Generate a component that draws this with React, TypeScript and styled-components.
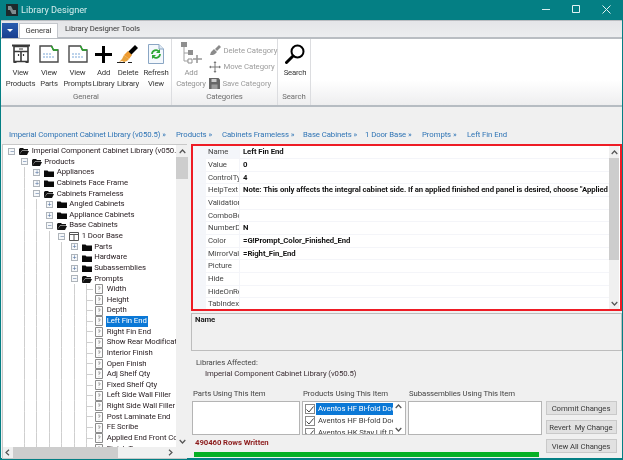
import React from "react";
import styled, { createGlobalStyle } from "styled-components";

const Global = createGlobalStyle`
  html, body { margin: 0; padding: 0; background: #047f84; }
  * { box-sizing: border-box; }
`;

const FONT = `Roboto, "Liberation Sans", sans-serif`;

const Page = styled.div`
  width: 623px; height: 460px; overflow: hidden; display: flex; flex-direction: column;
  font-family: ${FONT}; font-size: 7.75px; letter-spacing: -0.07px; color: #333; background: #047f84;
  filter: blur(0.35px);
`;
const TitleBar = styled.div`
  height: 20px; flex: none; display: flex; align-items: center; padding: 0 2px 1px 6px; color: #d5ecec; font-size: 9.2px; letter-spacing: 0;
`;
const TitleText = styled.span` margin-left: 3px; flex: 1; `;
const WinButton = styled.div`
  width: 30px; height: 19px; display: flex; align-items: center; justify-content: center;
`;
const Frame = styled.div`
  flex: 1; min-height: 0; margin: 0 1px 2px 1px; background: #f0f0f0; display: flex; flex-direction: column;
`;
const TabRow = styled.div`
  height: 16.5px; flex: none; display: flex; align-items: flex-end; padding-left: 1px;
  background: linear-gradient(#e4e5e8, #ecedef); border-top: 1px solid #b9bcc0;
`;
const AppButton = styled.div`
  width: 16px; height: 15px; margin-bottom: -1.5px; position: relative; z-index: 1;
  background: linear-gradient(#2a5db0, #1a3f8f);
  display: flex; align-items: center; justify-content: center;
`;
const Tab = styled.div<{ $active?: boolean; $w: number }>`
  width: ${p => p.$w}px; height: 15.5px; display: flex; align-items: center; justify-content: center; color: #3a3a3a;
  margin-left: ${p => (p.$active ? 1 : 0)}px;
  margin-bottom: ${p => (p.$active ? -1.5 : 0)}px; position: relative; z-index: 1;
  background: ${p => (p.$active ? "#fff" : "transparent")};
  ${p => p.$active && "border: 1px solid #c4c7cc; border-bottom: none;"}
`;
const Ribbon = styled.div`
  height: 70.5px; flex: none; display: flex; align-items: stretch;
  background: linear-gradient(#fff 0%, #fff 62%, #eeeeef 100%);
  border-top: 2px solid #b9bdc2; border-bottom: 2px solid #b6bcc2;
`;
const Group = styled.div<{ $w: number }>`
  width: ${p => p.$w}px; flex: none; display: flex; flex-direction: column;
  border-right: 1px solid #dcdde0;
`;
const GroupBody = styled.div<{ $pad?: number }>`
  flex: 1; display: flex; padding-left: ${p => p.$pad ?? 0}px; min-height: 0;
`;
const GroupLabel = styled.div`
  height: 14px; flex: none; text-align: center; color: #6e6e6e; line-height: 12.5px;
`;
const RibbonButton = styled.div<{ $w: number; $off?: boolean }>`
  width: ${p => p.$w}px; flex: none; display: flex; flex-direction: column; align-items: center;
  padding-top: 3.5px; text-align: center; line-height: 11px; letter-spacing: -0.2px; color: ${p => (p.$off ? "#949494" : "#383838")};
  white-space: nowrap;
`;
const IconSlot = styled.div`
  height: 24px; display: flex; align-items: center; justify-content: center; margin-bottom: 1px;
`;
const SmallStack = styled.div`
  display: flex; flex-direction: column; padding-top: 5.5px; gap: 4.5px;
`;
const SmallItem = styled.div`
  height: 12px; display: flex; align-items: center; gap: 3px; color: #9c9c9c; white-space: nowrap;
`;
const Crumbs = styled.div`
  height: 37px; flex: none; display: flex; align-items: flex-end; padding: 0 0 5px 8px; color: #2f74b5;
`;
const Crumb = styled.span<{ $w: number }>` width: ${p => p.$w}px; flex: none; white-space: nowrap; `;
const Main = styled.div`
  flex: 1; min-height: 0; display: flex; padding-left: 1px;
`;
const TreeBox = styled.div`
  width: 185px; height: 315px; flex: none; display: grid;
  grid-template-columns: 173px 12px; grid-template-rows: 302px 11px;
  background: #fff; border: 1px solid #c8c8c8;
`;
const TreeRows = styled.div` overflow: hidden; padding-top: 1px; `;
const TreeRowEl = styled.div`
  height: 10.63px; display: flex; align-items: stretch; white-space: nowrap; padding-left: 2.7px; color: #2b2125;
`;
const Cell = styled.div<{ $line?: boolean; $dash?: boolean }>`
  width: 12.5px; flex: none; display: flex; align-items: center; justify-content: center;
  ${p => p.$line && `background: linear-gradient(#cfcfcf, #cfcfcf) center / 1px 100% no-repeat;`}
  ${p => p.$dash && `background: linear-gradient(#cfcfcf, #cfcfcf) center / 1px 100% no-repeat, linear-gradient(#cfcfcf, #cfcfcf) right center / 6px 1px no-repeat;`}
`;
const Expander = styled.div`
  width: 7px; height: 7px; border: 1px solid #aeb4ba; background: #f6f8fa; display: flex; align-items: center; justify-content: center;
  color: #4a6a9a; font-size: 7px; line-height: 5px; font-family: "Liberation Sans", sans-serif;
`;
const TreeIcon = styled.div` width: 10px; margin-left: 1px; flex: none; display: flex; align-items: center; justify-content: center; `;
const TreeLabel = styled.span<{ $sel?: boolean }>`
  margin-left: ${p => (p.$sel ? 1.5 : 2.5)}px; line-height: 10.6px; padding: 0 ${p => (p.$sel ? 1 : 0)}px;
  background: ${p => (p.$sel ? "#0b78d6" : "transparent")}; color: ${p => (p.$sel ? "#fff" : "inherit")};
`;
const VBar = styled.div`
  background: #f0f0f0; display: flex; flex-direction: column; align-items: center; justify-content: space-between;
`;
const VThumb = styled.div<{ $h: number }>` width: 100%; height: ${p => p.$h}px; background: #cdcdcd; flex: none; `;
const VStart = styled.div` width: 100%; display: flex; flex-direction: column; align-items: center; `;
const Arrow = styled.div` height: 12px; flex: none; display: flex; align-items: center; justify-content: center; `;
const HBar = styled.div`
  background: #f0f0f0; display: flex; align-items: center; justify-content: space-between; padding: 0 3px 0 2px;
`;
const HTrack = styled.div` display: flex; align-items: center; height: 100%; `;
const HThumb = styled.div` width: 105px; height: 100%; background: #cdcdcd; margin-left: 3px; `;
const Corner = styled.div` background: #f0f0f0; `;
const Right = styled.div`
  flex: 1; min-width: 0; display: flex; flex-direction: column; margin-left: 4px;
`;
const GridBox = styled.div`
  height: 167px; flex: none; display: flex; border: 2px solid #ee1c25; background: #fff;
`;
const GridRows = styled.div` flex: 1; min-width: 0; overflow: hidden; padding-top: 0.3px; `;
const GridRowEl = styled.div`
  height: 12.67px; display: grid; grid-template-columns: 13px 33px 1fr; border-bottom: 1px solid #f4f5f9; white-space: nowrap;
`;
const Gutter = styled.div` background: #f4f6fa; `;
const PropName = styled.div<{ $sel?: boolean }>`
  overflow: hidden; padding-left: 2px; line-height: 12px; color: #454545; background: ${p => (p.$sel ? "#f4f6fa" : "#fff")};
`;
const PropValue = styled.div`
  overflow: hidden; padding-left: 3px; line-height: 11.5px; font-weight: 700; color: #141414; border-left: 1px solid #f4f5f9;
`;
const GridBar = styled(VBar)` width: 10px; flex: none; margin-right: 1px; `;
const Desc = styled.div`
  height: 38px; flex: none; margin-top: 2px; border: 1px solid #bdbdbd; padding: 1px 3px; font-weight: 700; color: #222;
`;
const Affected = styled.div` padding: 6px 0 0 5px; line-height: 11px; color: #454545; flex: none; `;
const AffectedName = styled.div` padding-left: 9px; color: #3c2e34; `;
const Bottom = styled.div`
  display: grid; flex: none; margin-top: 10px; padding-left: 1px;
  grid-template-columns: 107.5px 103.5px 134px 72px; column-gap: 2.5px;
  grid-template-rows: 12px 34px 17px 6px;
`;
const ColHead = styled.div` padding-left: 1px; color: #444; white-space: nowrap; line-height: 9px; `;
const ListBox = styled.div`
  background: #fff; border: 1px solid #b4b4b4; overflow: hidden;
`;
const ProductList = styled(ListBox)` display: grid; grid-template-columns: 1fr 12px; `;
const CheckRows = styled.div` padding: 1px 0 0 2px; overflow: hidden; `;
const CheckRow = styled.div` height: 12px; display: flex; align-items: center; gap: 1px; white-space: nowrap; color: #3a3a3a; `;
const Check = styled.div`
  width: 10px; height: 10px; flex: none; border: 1px solid #8a8a8a; background: #fff; display: flex; align-items: center; justify-content: center;
`;
const CheckText = styled.span<{ $sel?: boolean }>`
  flex: 1; overflow: hidden; background: ${p => (p.$sel ? "#0b78d6" : "transparent")}; color: ${p => (p.$sel ? "#fff" : "inherit")}; line-height: 12px; padding-left: 2px;
`;
const ListBar = styled.div` display: flex; flex-direction: column; justify-content: space-between; align-items: center; padding: 2px 0; background: #fff; `;
const ActionStack = styled.div`
  grid-column: 4; grid-row: 2 / 5; display: flex; flex-direction: column; gap: 5px; margin-left: 1px;
`;
const ActionButton = styled.div`
  height: 14px; flex: none; background: #e1e1e1; border: 1px solid #c9c9c9; display: flex; align-items: center; justify-content: center;
  color: #3a3a3a; white-space: pre;
`;
const Status = styled.div`
  grid-column: 1 / 4; padding: 2px 0 0 3px; color: #8c1c1c; font-weight: 700; line-height: 11px;
`;
const Progress = styled.div`
  grid-column: 1 / 4; height: 5px; margin: 0 3px 0 2px; background: #06b025;
`;

type RowT = { l: number; x?: "+" | "-"; i: "closed" | "open" | "table" | "doc"; t: string; sel?: boolean };
const tree: RowT[] = [
  { l: 0, x: "-", i: "open", t: "Imperial Component Cabinet Library (v050.5)" },
  { l: 1, x: "-", i: "open", t: "Products" },
  { l: 2, x: "+", i: "closed", t: "Appliances" },
  { l: 2, x: "+", i: "closed", t: "Cabinets Face Frame" },
  { l: 2, x: "-", i: "open", t: "Cabinets Frameless" },
  { l: 3, x: "+", i: "closed", t: "Angled Cabinets" },
  { l: 3, x: "+", i: "closed", t: "Appliance Cabinets" },
  { l: 3, x: "-", i: "open", t: "Base Cabinets" },
  { l: 4, x: "-", i: "table", t: "1 Door Base" },
  { l: 5, x: "+", i: "closed", t: "Parts" },
  { l: 5, x: "+", i: "closed", t: "Hardware" },
  { l: 5, x: "+", i: "closed", t: "Subassemblies" },
  { l: 5, x: "-", i: "open", t: "Prompts" },
  ...["Width", "Height", "Depth", "Left Fin End", "Right Fin End", "Show Rear Modifications", "Interior Finish", "Open Finish", "Adj Shelf Qty", "Fixed Shelf Qty", "Left Side Wall Filler", "Right Side Wall Filler", "Post Laminate End", "FE Scribe", "Applied End Front Color", "Finish Type"].map(
    (t): RowT => ({ l: 6, i: "doc", t, sel: t === "Left Fin End" })
  ),
];

const Closed = () => (
  <svg width="10" height="8" viewBox="0 0 10 8"><path d="M0 1.5h3.5l1 1H10V8H0z" fill="#0a0a0a" /></svg>
);
const Open = () => (
  <svg width="10" height="8" viewBox="0 0 10 8"><path d="M1 1h3l1 1h4v1.5H3L0 8V2z" fill="#111" /><path d="M3 4h7L8 8H0z" fill="#111" /></svg>
);
const Table = () => (
  <svg width="10" height="9" viewBox="0 0 10 9" fill="none" stroke="#555"><path d="M.5.5h9v8h-9zM.5 2.5h9M5 2.5v6" /></svg>
);
const Doc = () => (
  <svg width="8" height="10" viewBox="0 0 8 10"><path d="M.5.5h7v9h-7z" fill="#fbfbfb" stroke="#8c8c8c" /><path d="M3 3h2v1.5H4V6M4 7.5v.6" stroke="#aaa" fill="none" /></svg>
);
const treeIcons = { closed: <Closed />, open: <Open />, table: <Table />, doc: <Doc /> };

const TreeRow = ({ r }: { r: RowT }) => {
  const guides = r.l > 0 ? [<Cell key="g0" />] : [];
  for (let i = 1; i < r.l; i++) guides.push(<Cell key={i} $line />);
  return (
    <TreeRowEl>
      {guides}
      {r.x ? (
        <Cell>
          <Expander>{r.x === "+" ? "+" : "−"}</Expander>
        </Cell>
      ) : (
        <Cell $dash />
      )}
      <TreeIcon>{treeIcons[r.i]}</TreeIcon>
      <TreeLabel $sel={r.sel}>{r.t}</TreeLabel>
    </TreeRowEl>
  );
};

const props: [string, string][] = [
  ["Name", "Left Fin End"],
  ["Value", "0"],
  ["ControlType", "4"],
  ["HelpText", 'Note: This only affects the integral cabinet side. If an applied finished end panel is desired, choose "Applied End Panel"'],
  ["ValidationRule", ""],
  ["ComboBoxItems", ""],
  ["NumberDecimals", "N"],
  ["Color", "=G!Prompt_Color_Finished_End"],
  ["MirrorValue", "=Right_Fin_End"],
  ["Picture", ""],
  ["Hide", ""],
  ["HideOnReport", ""],
  ["TabIndex", ""],
];

const ChevUp = () => (
  <svg width="7" height="5" viewBox="0 0 7 5" fill="none" stroke="#555" strokeWidth="1.2"><path d="M.7 4l2.8-3 2.8 3" /></svg>
);
const ChevDown = () => (
  <svg width="7" height="5" viewBox="0 0 7 5" fill="none" stroke="#555" strokeWidth="1.2"><path d="M.7 1l2.8 3 2.8-3" /></svg>
);
const ChevLeft = () => (
  <svg width="5" height="7" viewBox="0 0 5 7" fill="none" stroke="#555" strokeWidth="1.2"><path d="M4 .7L1 3.5l3 2.8" /></svg>
);
const ChevRight = () => (
  <svg width="5" height="7" viewBox="0 0 5 7" fill="none" stroke="#555" strokeWidth="1.2"><path d="M1 .7l3 2.8-3 2.8" /></svg>
);

const Cabinet = () => (
  <svg width="20" height="20" viewBox="0 0 20 20" fill="none" stroke="#3a3a3a">
    <path d="M1 1.5h18" strokeWidth="2" />
    <path d="M3 2.5h14v15H3zM3 7.5h14M10 7.5v10" strokeWidth="1.6" />
    <path d="M8 5h4M7.5 10v2M12.5 10v2M2.5 18.5h3M14.5 18.5h3" strokeWidth="1.2" />
  </svg>
);
const PagePic = () => (
  <svg width="20" height="18" viewBox="0 0 20 18" fill="none">
    <path d="M1 1h11.5l2 4H19v12H1z" fill="#fff" stroke="#4a4a4a" strokeWidth="1.4" />
    <path d="M12.5 1l2 4H19" stroke="#29a52a" strokeWidth="1.4" />
    <path d="M4 9h2M7 9h2M10 9h2M4 12h2M7 12h2M10 12h2M13 12h2" stroke="#7da7d8" strokeWidth="1.2" />
  </svg>
);
const Plus = () => (
  <svg width="19" height="19" viewBox="0 0 19 19"><path d="M8 1h3v7h7v3h-7v7H8v-7H1V8h7z" fill="#000" /></svg>
);
const Brush = () => (
  <svg width="22" height="20" viewBox="0 0 22 20">
    <path d="M11 8l7-7 3 3-7 7z" fill="#000" />
    <path d="M7 11l4-4 4 4-3 4z" fill="#ef9a2e" />
    <path d="M7 11l5 4-2 2-3 1-2-1-3 1 3-3z" fill="#e9a23c" />
    <path d="M0 18h8v1H0zM11 18h4v1h-4z" fill="#222" />
  </svg>
);
const Refresh = () => (
  <svg width="16" height="20" viewBox="0 0 16 20">
    <path d="M.5.5H11L15.5 5v14.5H.5z" fill="#f4f8fc" stroke="#8aa6c4" />
    <path d="M11 .5V5h4.5" fill="#dfe9f3" stroke="#8aa6c4" />
    <path d="M4 10a4 4 0 0 1 7-2.5M12 10a4 4 0 0 1-7 2.5" stroke="#2fa836" strokeWidth="1.8" fill="none" />
    <path d="M12 5v4H8zM4 15v-4h4z" fill="#2fa836" />
  </svg>
);
const CatTree = () => (
  <svg width="22" height="24" viewBox="0 0 22 24" fill="none">
    <path d="M1 0h6v5H1z" fill="#8f8f8f" />
    <path d="M4 5v14h4M4 11h4" stroke="#a0a0a0" />
    <path d="M8 8h5v5H8z" fill="#8f8f8f" />
    <path d="M8 17h4v4H8z" stroke="#8f8f8f" />
    <path d="M17 13v8M13 17h9" stroke="#999" strokeWidth="1.6" />
  </svg>
);
const Lens = () => (
  <svg width="20" height="20" viewBox="0 0 20 20" fill="none">
    <circle cx="12.5" cy="7.5" r="6" stroke="#000" strokeWidth="2" />
    <path d="M8 12l-6.5 6.5" stroke="#000" strokeWidth="3" strokeLinecap="round" />
  </svg>
);
const BrushSmall = () => (
  <svg width="12" height="11" viewBox="0 0 12 11"><path d="M6 4l4-4 2 2-4 4zM2 7l3-3 3 3-2 2-2 1-3 0z" fill="#8b8b8b" /></svg>
);
const MoveSmall = () => (
  <svg width="12" height="12" viewBox="0 0 12 12" fill="none" stroke="#777"><path d="M6 1v10M1 6h10" /><path d="M6 0L4.5 2h3zM6 12l-1.5-2h3zM0 6l2-1.5v3zM12 6l-2-1.5v3z" fill="#777" stroke="none" /></svg>
);
const Save = () => (
  <svg width="11" height="11" viewBox="0 0 11 11"><path d="M0 0h9.5L11 1.5V11H0z" fill="#666" /><path d="M2.5 1h5v3h-5z" fill="#ccc" /><path d="M2.5 6.5h6V11h-6z" fill="#9a9a9a" /></svg>
);

const TitleGlyph = () => (
  <svg width="12" height="12" viewBox="0 0 12 12"><path d="M0 0h12v12H0z" fill="#1d2a2c" /><path d="M2 2h3l2 4h3v4H6L4 6H2z" fill="#7f8d8f" /></svg>
);

export default function App() {
  return (
    <Page>
      <Global />
      <TitleBar>
        <TitleGlyph />
        <TitleText>Library Designer</TitleText>
        <WinButton><svg width="8" height="1"><path d="M0 .5h8" stroke="#d8eeee" /></svg></WinButton>
        <WinButton><svg width="9" height="9" fill="none"><path d="M.5.5h7v7h-7z" stroke="#e2f2f2" /></svg></WinButton>
        <WinButton><svg width="9" height="9" fill="none"><path d="M.5.5l8 8M8.5.5l-8 8" stroke="#e2f2f2" /></svg></WinButton>
      </TitleBar>
      <Frame>
        <TabRow>
          <AppButton><svg width="6" height="4"><path d="M0 0h6L3 3z" fill="#fff" /></svg></AppButton>
          <Tab $active $w={39}>General</Tab>
          <Tab $w={89}>Library Designer Tools</Tab>
        </TabRow>
        <Ribbon>
          <Group $w={171}>
            <GroupBody $pad={5}>
              <RibbonButton $w={29}><IconSlot><Cabinet /></IconSlot>View<br />Products</RibbonButton>
              <RibbonButton $w={28}><IconSlot><PagePic /></IconSlot>View<br />Parts</RibbonButton>
              <RibbonButton $w={29}><IconSlot><PagePic /></IconSlot>View<br />Prompts</RibbonButton>
              <RibbonButton $w={23}><IconSlot><Plus /></IconSlot>Add<br />Library</RibbonButton>
              <RibbonButton $w={26}><IconSlot><Brush /></IconSlot>Delete<br />Library</RibbonButton>
              <RibbonButton $w={30}><IconSlot><Refresh /></IconSlot>Refresh<br />View</RibbonButton>
            </GroupBody>
            <GroupLabel>General</GroupLabel>
          </Group>
          <Group $w={106}>
            <GroupBody $pad={1.5}>
              <RibbonButton $w={35} $off><IconSlot><CatTree /></IconSlot>Add<br />Category</RibbonButton>
              <SmallStack>
                <SmallItem><BrushSmall />Delete Category</SmallItem>
                <SmallItem><MoveSmall />Move Category</SmallItem>
                <SmallItem><Save />Save Category</SmallItem>
              </SmallStack>
            </GroupBody>
            <GroupLabel>Categories</GroupLabel>
          </Group>
          <Group $w={33}>
            <GroupBody $pad={1}>
              <RibbonButton $w={32}><IconSlot><Lens /></IconSlot>Search</RibbonButton>
            </GroupBody>
            <GroupLabel>Search</GroupLabel>
          </Group>
        </Ribbon>
        <Crumbs>
          <Crumb $w={167}>Imperial Component Cabinet Library (v050.5) »</Crumb>
          <Crumb $w={46}>Products »</Crumb>
          <Crumb $w={81}>Cabinets Frameless »</Crumb>
          <Crumb $w={62}>Base Cabinets »</Crumb>
          <Crumb $w={57}>1 Door Base »</Crumb>
          <Crumb $w={45}>Prompts »</Crumb>
          <Crumb $w={60}>Left Fin End</Crumb>
        </Crumbs>
        <Main>
          <TreeBox>
            <TreeRows>{tree.map(r => <TreeRow key={r.t} r={r} />)}</TreeRows>
            <VBar>
              <VStart><Arrow><ChevUp /></Arrow><VThumb $h={22} /></VStart>
              <Arrow><ChevDown /></Arrow>
            </VBar>
            <HBar>
              <HTrack><Arrow><ChevLeft /></Arrow><HThumb /></HTrack>
              <ChevRight />
            </HBar>
            <Corner />
          </TreeBox>
          <Right>
            <GridBox>
              <GridRows>
                {props.map(([k, v]) => (
                  <GridRowEl key={k}>
                    <Gutter />
                    <PropName $sel={k === "Name"}>{k}</PropName>
                    <PropValue>{v}</PropValue>
                  </GridRowEl>
                ))}
              </GridRows>
              <GridBar>
                <VStart><Arrow><ChevUp /></Arrow><VThumb $h={102} /></VStart>
                <Arrow><ChevDown /></Arrow>
              </GridBar>
            </GridBox>
            <Desc>Name</Desc>
            <Affected>
              Libraries Affected:
              <AffectedName>Imperial Component Cabinet Library (v050.5)</AffectedName>
            </Affected>
            <Bottom>
              <ColHead>Parts Using This Item</ColHead>
              <ColHead>Products Using This Item</ColHead>
              <ColHead>Subassemblies Using This Item</ColHead>
              <div />
              <ListBox />
              <ProductList>
                <CheckRows>
                  {["Aventos HF Bi-fold Door", "Aventos HF Bi-fold Door", "Aventos HK Stay Lift Door"].map((t, i) => (
                    <CheckRow key={i}>
                      <Check><svg width="8" height="7" fill="none"><path d="M.5 3.5l2.5 2.5L7.5.5" stroke="#444" /></svg></Check>
                      <CheckText $sel={i === 0}>{t}</CheckText>
                    </CheckRow>
                  ))}
                </CheckRows>
                <ListBar><ChevUp /><ChevDown /></ListBar>
              </ProductList>
              <ListBox />
              <ActionStack>
                <ActionButton>Commit Changes</ActionButton>
                <ActionButton>Revert  My Change</ActionButton>
                <ActionButton>View All Changes</ActionButton>
              </ActionStack>
              <Status>490460 Rows Written</Status>
              <Progress />
            </Bottom>
          </Right>
        </Main>
      </Frame>
    </Page>
  );
}
